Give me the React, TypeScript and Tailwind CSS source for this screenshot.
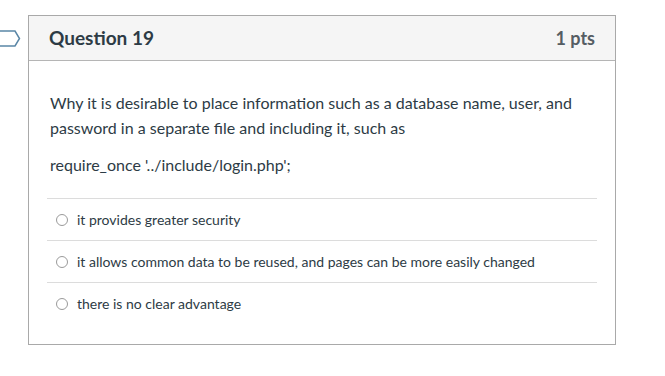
const options = [
  "it provides greater security",
  "it allows common data to be reused, and pages can be more easily changed",
  "there is no clear advantage",
];

export default function App() {
  return (
    <div className="min-h-screen bg-white pt-[15px] font-['Lato','Liberation_Sans',sans-serif] text-[#2d3b45]">
      <div className="flex">
        <div className="w-[28px] shrink-0 pt-[15px]">
          <svg width="21" height="17" viewBox="0 0 21 17" className="block">
            <path d="M-2 1 H15 L19.5 8.5 L15 16 H-2" fill="none" stroke="#5a86a6" strokeWidth="1.5" />
          </svg>
        </div>
        <div className="w-[588px] border border-[#a9a9a9]">
          <div className="flex h-[45px] items-center justify-between border-b border-[#b5b5b5] bg-[#f5f5f5] px-5">
            <h2 className="text-[19px] font-bold">Question 19</h2>
            <span className="text-[18px] font-bold text-[#555d63]">1 pts</span>
          </div>
          <div className="px-[18px] pt-[29px] pb-[20px]">
            <div className="pl-[3px] text-[16px] leading-[25px]">
              <p>
                Why it is desirable to place information such as a database name, user, and password in a separate
                file and including it, such as
              </p>
              <p className="mt-[12px]">require_once '../include/login.php';</p>
            </div>
            <div className="mt-[21px]">
              {options.map((o) => (
                <div key={o} className="flex h-[42px] items-center gap-[9px] border-t border-[#dcdcdc] pl-[9px] text-[14px]">
                  <span className="h-[12px] w-[12px] shrink-0 rounded-full border border-[#9a9a9a] bg-white" />
                  <span>{o}</span>
                </div>
              ))}
            </div>
          </div>
        </div>
      </div>
    </div>
  );
}
